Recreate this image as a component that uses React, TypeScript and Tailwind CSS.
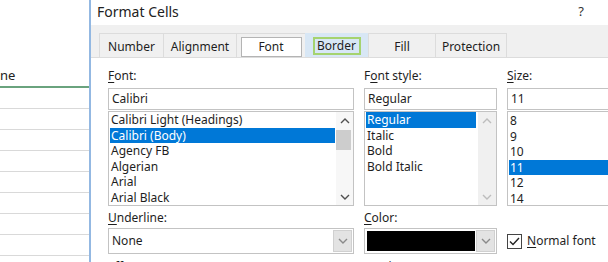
import React from "react";

function Chevron({ up = false, color = "#5a5a5a" }: { up?: boolean; color?: string }) {
  return (
    <svg width="10" height="6" viewBox="0 0 10 6" className="block">
      <polyline
        points={up ? "1,5 5,1 9,5" : "1,1 5,5 9,1"}
        fill="none"
        stroke={color}
        strokeWidth="1.4"
      />
    </svg>
  );
}

function Label({ text, u }: { text: string; u: number }) {
  return (
    <div className="h-[16px] leading-[16px] whitespace-nowrap">
      {text.slice(0, u)}
      <span className="underline underline-offset-[2px]">{text[u]}</span>
      {text.slice(u + 1)}
    </div>
  );
}

function Row({ text, sel = false }: { text: string; sel?: boolean }) {
  return (
    <div
      className={
        "h-[15.5px] leading-[15.5px] pl-[1px] whitespace-nowrap " +
        (sel ? "bg-[#0078d7] text-white" : "text-[#1e1e1e]")
      }
    >
      {text}
    </div>
  );
}

export default function App() {
  const sheetRows = [0, 1, 2, 3, 4, 5, 6, 7, 8];
  return (
    <div className="w-[608px] h-[262px] overflow-hidden bg-white flex font-['Segoe_UI','Noto_Sans',sans-serif] text-[12px] text-[#1e1e1e]">
      {/* spreadsheet behind */}
      <div className="w-[89px] shrink-0 flex flex-col">
        <div className="h-[66px] shrink-0" />
        <div className="h-[22px] shrink-0 border-b-2 border-[#6aa37e] flex items-center text-[13px] text-[#222]">
          ne
        </div>
        {sheetRows.map((i) => (
          <div key={i} className="h-[21px] shrink-0 border-b border-[#d9d9d9]" />
        ))}
      </div>
      <div className="w-[2px] shrink-0 bg-[#93b8e2]" />

      {/* dialog */}
      <div className="flex-1 flex flex-col min-w-0">
        <div className="h-[25px] shrink-0 flex items-center justify-between pl-[6px] pr-[24px] pb-[2px]">
          <span className="text-[14px] text-[#222]">Format Cells</span>
          <span className="text-[13px] text-[#333]">?</span>
        </div>
        <div className="h-[32px] shrink-0 bg-[#f0f0f0] pl-[8px] pt-[8px] flex items-end">
          <div className="w-[64px] h-[24px] pt-[2px] border-t border-l border-[#dcdcdc] flex items-center justify-center">Number</div>
          <div className="w-[73px] h-[24px] pt-[2px] border-t border-l border-[#dcdcdc] flex items-center justify-center">Alignment</div>
          <div className="w-[69px] h-[24px] border-t border-l border-[#dcdcdc] flex items-center justify-center">
            <div className="w-[61px] h-[20px] mt-[2px] pt-[1px] bg-white border border-[#b4b4b4] flex items-center justify-center">Font</div>
          </div>
          <div className="w-[63px] h-[24px] bg-[#d8e7f5] flex items-center justify-center">
            <div className="w-[48px] h-[18px] mt-[1px] pt-[1px] border-2 border-[#a5d36f] flex items-center justify-center">Border</div>
          </div>
          <div className="w-[67px] h-[24px] pt-[2px] border-t border-l border-[#dcdcdc] flex items-center justify-center">Fill</div>
          <div className="w-[72px] h-[24px] pt-[2px] border-t border-l border-r border-[#dcdcdc] flex items-center justify-center">Protection</div>
        </div>

        <div className="flex-1 bg-white border-t border-[#dcdcdc] pl-[17px] pt-[10px] flex gap-[10px]">
          {/* Font column */}
          <div className="w-[246px] shrink-0 flex flex-col">
            <Label text="Font:" u={0} />
            <div className="mt-[4px] h-[22px] border border-[#c3c3c3] pl-[3px] flex items-center">Calibri</div>
            <div className="mt-[1px] h-[95px] border border-[#c3c3c3] flex overflow-hidden">
              <div className="flex-1 px-[1px] pr-[1px] overflow-hidden">
                <Row text="Calibri Light (Headings)" />
                <Row text="Calibri (Body)" sel />
                <Row text="Agency FB" />
                <Row text="Algerian" />
                <Row text="Arial" />
                <Row text="Arial Black" />
              </div>
              <div className="w-[17px] shrink-0 bg-[#f7f7f7] flex flex-col">
                <div className="h-[17px] flex items-center justify-center">
                  <Chevron up color="#505050" />
                </div>
                <div className="mt-[1px] h-[20px] mr-[2px] bg-[#cdcdcd]" />
                <div className="flex-1" />
                <div className="h-[17px] flex items-center justify-center">
                  <Chevron color="#505050" />
                </div>
              </div>
            </div>
            <div className="mt-[4px]">
              <Label text="Underline:" u={0} />
            </div>
            <div className="mt-[2px] h-[26px] border border-[#c3c3c3] flex">
              <div className="flex-1 pl-[3px] flex items-center">None</div>
              <div className="w-[19px] my-[1px] mr-[1px] bg-[#e3e3e3] border border-[#d0d0d0] flex items-center justify-center">
                <Chevron color="#8a8a8a" />
              </div>
            </div>
            <div className="mt-[5px]">
              <Label text="Effects" u={1} />
            </div>
          </div>

          {/* Font style column */}
          <div className="w-[133px] shrink-0 flex flex-col">
            <Label text="Font style:" u={1} />
            <div className="mt-[4px] h-[22px] border border-[#c3c3c3] pl-[3px] flex items-center">Regular</div>
            <div className="mt-[1px] h-[95px] border border-[#c3c3c3] flex overflow-hidden">
              <div className="flex-1 px-[1px] pr-[2px] overflow-hidden">
                <Row text="Regular" sel />
                <Row text="Italic" />
                <Row text="Bold" />
                <Row text="Bold Italic" />
              </div>
              <div className="w-[18px] shrink-0 bg-[#f0f0f0] flex flex-col">
                <div className="h-[17px] flex items-center justify-center">
                  <Chevron up color="#bdbdbd" />
                </div>
                <div className="flex-1" />
                <div className="h-[17px] flex items-center justify-center">
                  <Chevron color="#bdbdbd" />
                </div>
              </div>
            </div>
            <div className="mt-[4px]">
              <Label text="Color:" u={0} />
            </div>
            <div className="mt-[2px] h-[26px] border border-[#c3c3c3] flex">
              <div className="flex-1 p-[2px] pr-[1px]">
                <div className="w-full h-full bg-black" />
              </div>
              <div className="w-[19px] my-[1px] mr-[1px] bg-[#e3e3e3] border border-[#d0d0d0] flex items-center justify-center">
                <Chevron color="#8a8a8a" />
              </div>
            </div>
            <div className="mt-[5px]">
              <Label text="Preview" u={0} />
            </div>
          </div>

          {/* Size column */}
          <div className="w-[130px] shrink-0 flex flex-col">
            <Label text="Size:" u={0} />
            <div className="mt-[4px] h-[22px] border border-[#c3c3c3] pl-[3px] flex items-center text-[#1e1e1e]">
              <span>11</span>
            </div>
            <div className="mt-[1px] h-[95px] border border-[#c3c3c3] overflow-hidden">
              <div className="pl-[1px] pt-[1px]">
                <Row text="8" />
                <Row text="9" />
                <Row text="10" />
                <Row text="11" sel />
                <Row text="12" />
                <Row text="14" />
              </div>
            </div>
            <div className="mt-[4px] h-[16px]" />
            <div className="mt-[2px] h-[26px] flex items-center gap-[5px]">
              <div className="w-[15px] h-[15px] border border-[#444] bg-white flex items-center justify-center">
                <svg width="11" height="9" viewBox="0 0 11 9">
                  <polyline points="1,4.5 4,7.5 10,1" fill="none" stroke="#222" strokeWidth="1.4" />
                </svg>
              </div>
              <span className="whitespace-nowrap">
                <span className="underline underline-offset-[2px]">N</span>ormal font
              </span>
            </div>
          </div>
        </div>
      </div>
    </div>
  );
}
